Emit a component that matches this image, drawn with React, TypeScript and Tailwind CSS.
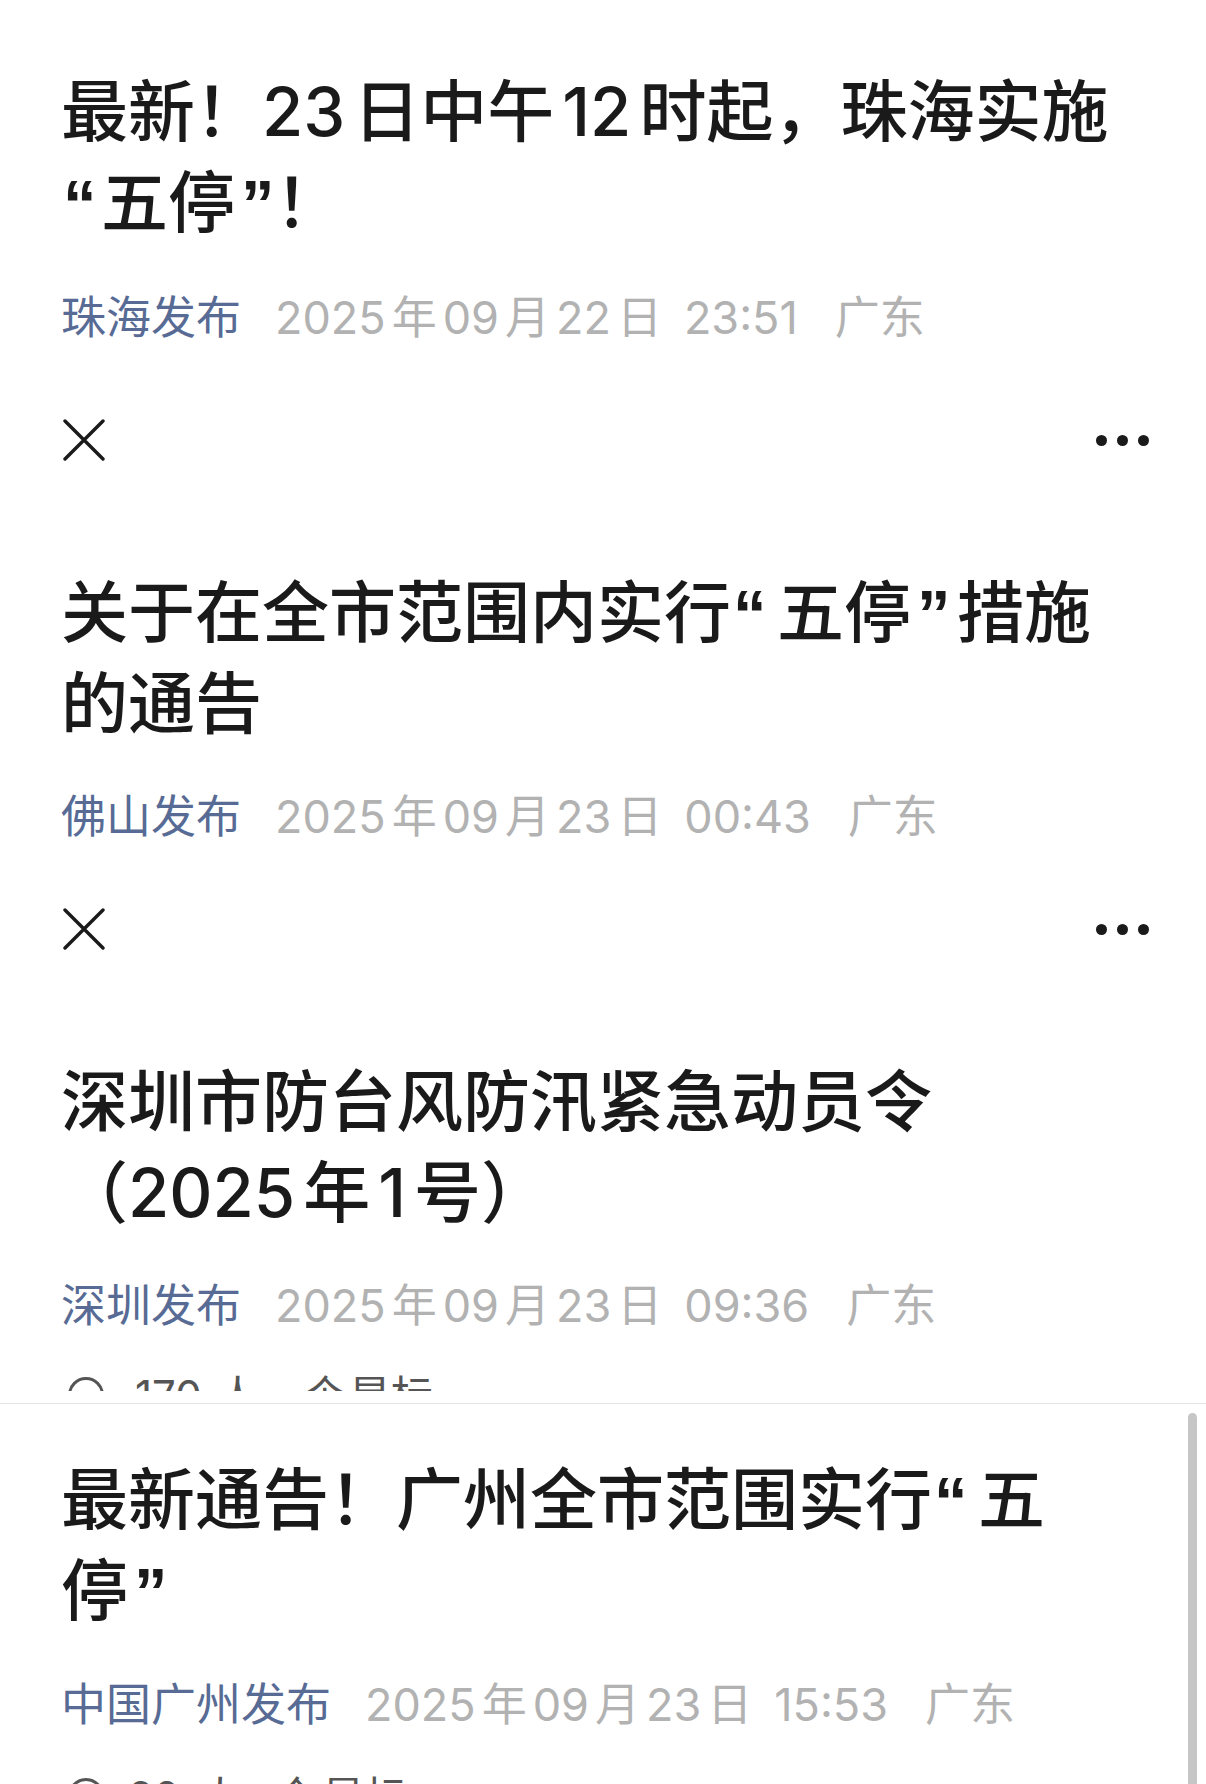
import React from "react";

function QO({ w = "w-[46px]" }: { w?: string }) {
  return (
    <span className={`inline-block ${w} leading-none pl-[2px] text-left [font-family:'Liberation_Sans',sans-serif] font-bold`}>“</span>
  );
}
function QC({ w = "w-[46px]" }: { w?: string }) {
  return (
    <span className={`inline-block ${w} leading-none pl-[6px] text-left [font-family:'Liberation_Sans',sans-serif] font-bold`}>”</span>
  );
}
function N({ children, l = true, r = true }: { children: React.ReactNode; l?: boolean; r?: boolean }) {
  return <span className={`${l ? "ml-[8px]" : ""} ${r ? "mr-[8px]" : ""}`}>{children}</span>;
}

function Title({ lines }: { lines: React.ReactNode[] }) {
  return (
    <div className="px-[61px] text-[67px] leading-[91px] font-medium text-[#1a1a1a]">
      {lines.map((l, i) => (
        <div key={i} className="h-[91px] whitespace-nowrap">
          {l}
        </div>
      ))}
    </div>
  );
}

function Meta({ src, y, m, d, time, cls }: { src: string; y: string; m: string; d: string; time: string; cls: string }) {
  return (
    <div className={`flex items-center px-[61px] h-[60px] text-[45px] leading-[60px] whitespace-nowrap ${cls}`}>
      <span className="text-[#576b95]">{src}</span>
      <span className="ml-[34px] text-[#b2b2b2]">
        {y}
        <span className="mx-[6px]">年</span>
        {m}
        <span className="mx-[6px]">月</span>
        {d}
        <span className="ml-[6px]">日</span>
      </span>
      <span className="ml-[22px] text-[#b2b2b2]">{time}</span>
      <span className="ml-[37px] text-[#b2b2b2]">广东</span>
    </div>
  );
}

function ActionRow({ cls }: { cls: string }) {
  return (
    <div className={`flex items-center justify-between pl-[63px] pr-[57px] h-[42px] ${cls}`}>
      <svg width="42" height="42" viewBox="0 0 42 42" fill="none">
        <path d="M2 2L40 40M40 2L2 40" stroke="#1a1a1a" strokeWidth="3.4" strokeLinecap="round" />
      </svg>
      <div className="flex items-center gap-[10px]">
        <div className="w-[11px] h-[11px] rounded-full bg-[#1a1a1a]" />
        <div className="w-[11px] h-[11px] rounded-full bg-[#1a1a1a]" />
        <div className="w-[11px] h-[11px] rounded-full bg-[#1a1a1a]" />
      </div>
    </div>
  );
}

function PartialRow({
  count,
  cls,
  m,
}: {
  count: string;
  cls: string;
  m: [string, string, string, string, string];
}) {
  return (
    <div className={`overflow-hidden h-[16px] ${cls}`}>
      <div className="flex items-start pl-[68px] text-[42px] leading-[42px] text-[#555555] whitespace-nowrap">
        <div className="mt-[2px] w-[36px] h-[36px] rounded-full border-[3px] border-[#555555] shrink-0" />
        <span className={m[0]}>{count}</span>
        <span className={m[1]}>人</span>
        <span className={m[2]}>·</span>
        <span className={m[3]}>个</span>
        <span className={m[4]}>星标</span>
      </div>
    </div>
  );
}

export default function App() {
  return (
    <div className="relative w-[1206px] h-[1784px] overflow-hidden bg-white [font-family:Inter,'Noto_Sans_CJK_SC',sans-serif]">
      <div className="flex flex-col">
        <div className="pt-[66px]">
          <Title
            lines={[
              <>
                最新！<N l={false}>23</N>日中午<N>12</N>时起，珠海实施
              </>,
              <>
                <QO w="w-[40px]" />
                五停
                <QC w="w-[40px]" />！
              </>,
            ]}
          />
        </div>
        <Meta cls="mt-[40px]" src="珠海发布" y="2025" m="09" d="22" time="23:51" />
        <ActionRow cls="mt-[71px]" />

        <div className="mt-[106px]">
          <Title
            lines={[
              <>
                关于在全市范围内实行
                <QO />
                五停
                <QC />
                措施
              </>,
              <>的通告</>,
            ]}
          />
        </div>
        <Meta cls="mt-[38px]" src="佛山发布" y="2025" m="09" d="23" time="00:43" />
        <ActionRow cls="mt-[61px]" />

        <div className="mt-[106px]">
          <Title
            lines={[
              <>深圳市防台风防汛紧急动员令</>,
              <>
                （<N l={false}>2025</N>年<N>1</N>号）
              </>,
            ]}
          />
        </div>
        <Meta cls="mt-[38px]" src="深圳发布" y="2025" m="09" d="23" time="09:36" />
        <PartialRow
          cls="mt-[39px]"
          count="170"
          m={["ml-[31px]", "ml-[15px]", "ml-[14px]", "ml-[19px]", "ml-[3px]"]}
        />

        <div className="mt-[12px] h-px bg-[#e5e5e5]" />

        <div className="mt-[50px]">
          <Title
            lines={[
              <>
                最新通告！广州全市范围实行
                <QO />五
              </>,
              <>
                停
                <QC />
              </>,
            ]}
          />
        </div>
        <Meta cls="mt-[39px]" src="中国广州发布" y="2025" m="09" d="23" time="15:53" />
        <PartialRow
          cls="mt-[41px]"
          count="20"
          m={["ml-[24px]", "ml-[19px]", "ml-[10px]", "ml-[12px]", "ml-[5px]"]}
        />
      </div>

      <div className="absolute right-[9px] top-[1413px] bottom-0 w-[9px] rounded-t-full bg-[#c6c6c6]" />
    </div>
  );
}
